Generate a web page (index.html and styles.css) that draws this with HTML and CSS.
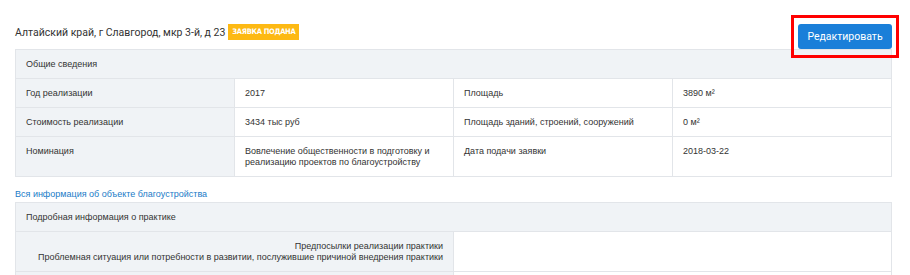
FILE: index.html
```html
<!DOCTYPE html>
<html lang="ru">

<head>
    <meta charset="UTF-8" />
    <title>Объект благоустройства</title>
    <link rel="stylesheet" href="styles.css">
</head>

<body>
    <div class="page">
        <div class="head">
            <div class="title">
                Алтайский край, г Славгород, мкр 3-й, д 23
                <span class="badge">Заявка подана</span>
            </div>
            <div class="edit-wrap">
                <a class="btn" href="#">Редактировать</a>
                <span class="mark"></span>
            </div>
        </div>

        <table class="info">
            <tr>
                <th colspan="4">Общие сведения</th>
            </tr>
            <tr>
                <td class="label">Год реализации</td>
                <td>2017</td>
                <td>Площадь</td>
                <td>3890 м²</td>
            </tr>
            <tr>
                <td class="label">Стоимость реализации</td>
                <td>3434 тыс руб</td>
                <td>Площадь зданий, строений, сооружений</td>
                <td>0 м²</td>
            </tr>
            <tr>
                <td class="label">Номинация</td>
                <td>Вовлечение общественности в подготовку и<br>реализацию проектов по благоустройству</td>
                <td>Дата подачи заявки</td>
                <td>2018-03-22</td>
            </tr>
        </table>

        <a class="more" href="#">Вся информация об объекте благоустройства</a>

        <table class="info practice">
            <tr>
                <th colspan="2">Подробная информация о практике</th>
            </tr>
            <tr>
                <td class="label right">Предпосылки реализации практики<br>Проблемная ситуация или потребности в развитии, послужившие причиной внедрения практики</td>
                <td></td>
            </tr>
            <tr>
                <td class="label right empty"></td>
                <td class="empty"></td>
            </tr>
        </table>
    </div>
</body>

</html>
```

FILE: styles.css
```css
* {
    margin: 0;
    padding: 0;
    box-sizing: border-box;
}

body {
    background: #fff;
    color: #333;
    font-family: "Liberation Sans", Arial, sans-serif;
    font-size: 9px;
}

.page {
    width: 877px;
    margin-left: 15px;
    padding-top: 24px;
}

.head {
    display: flex;
    justify-content: space-between;
    align-items: flex-start;
}

.title {
    display: flex;
    align-items: center;
    gap: 3px;
    height: 16px;
    font-family: Roboto, "Liberation Sans", sans-serif;
    font-size: 10.5px;
    color: #333;
}

.badge {
    display: inline-block;
    height: 16px;
    line-height: 16px;
    padding: 0 4px;
    background: #fdb913;
    color: #fff;
    font-family: "Liberation Sans Narrow", "DejaVu Sans Condensed", sans-serif;
    font-weight: bold;
    font-size: 7.5px;
    letter-spacing: -0.3px;
    text-transform: uppercase;
}

.edit-wrap {
    position: relative;
}

.btn {
    display: block;
    width: 94px;
    height: 25px;
    line-height: 25px;
    text-align: center;
    background: #1a7fd9;
    color: #fff;
    border-radius: 3px;
    text-decoration: none;
    font-family: Roboto, "Liberation Sans", sans-serif;
    font-size: 10.5px;
}

.mark {
    position: absolute;
    left: -7px;
    top: -9px;
    width: 108px;
    height: 43px;
    border: 3px solid #f00;
}

.info {
    width: 100%;
    border-collapse: collapse;
    table-layout: fixed;
    border: 1px solid #e2e5e9;
}

.info th {
    background: #f0f3f6;
    text-align: left;
    font-weight: normal;
    padding: 9px 10px 8px;
    line-height: 11px;
    border-bottom: 1px solid #e2e5e9;
}

.info td {
    vertical-align: top;
    padding: 9px 10px 8px;
    line-height: 11px;
    border: 1px solid #e2e5e9;
}

.info td.label {
    background: #f0f3f6;
}

.info td.right {
    text-align: right;
}

.info td.empty {
    height: 39px;
}

.practice td.label {
    width: 438px;
}

.more {
    display: block;
    margin: 12px 0 2px;
    line-height: 11px;
    color: #1a7bc7;
    text-decoration: none;
}
```
